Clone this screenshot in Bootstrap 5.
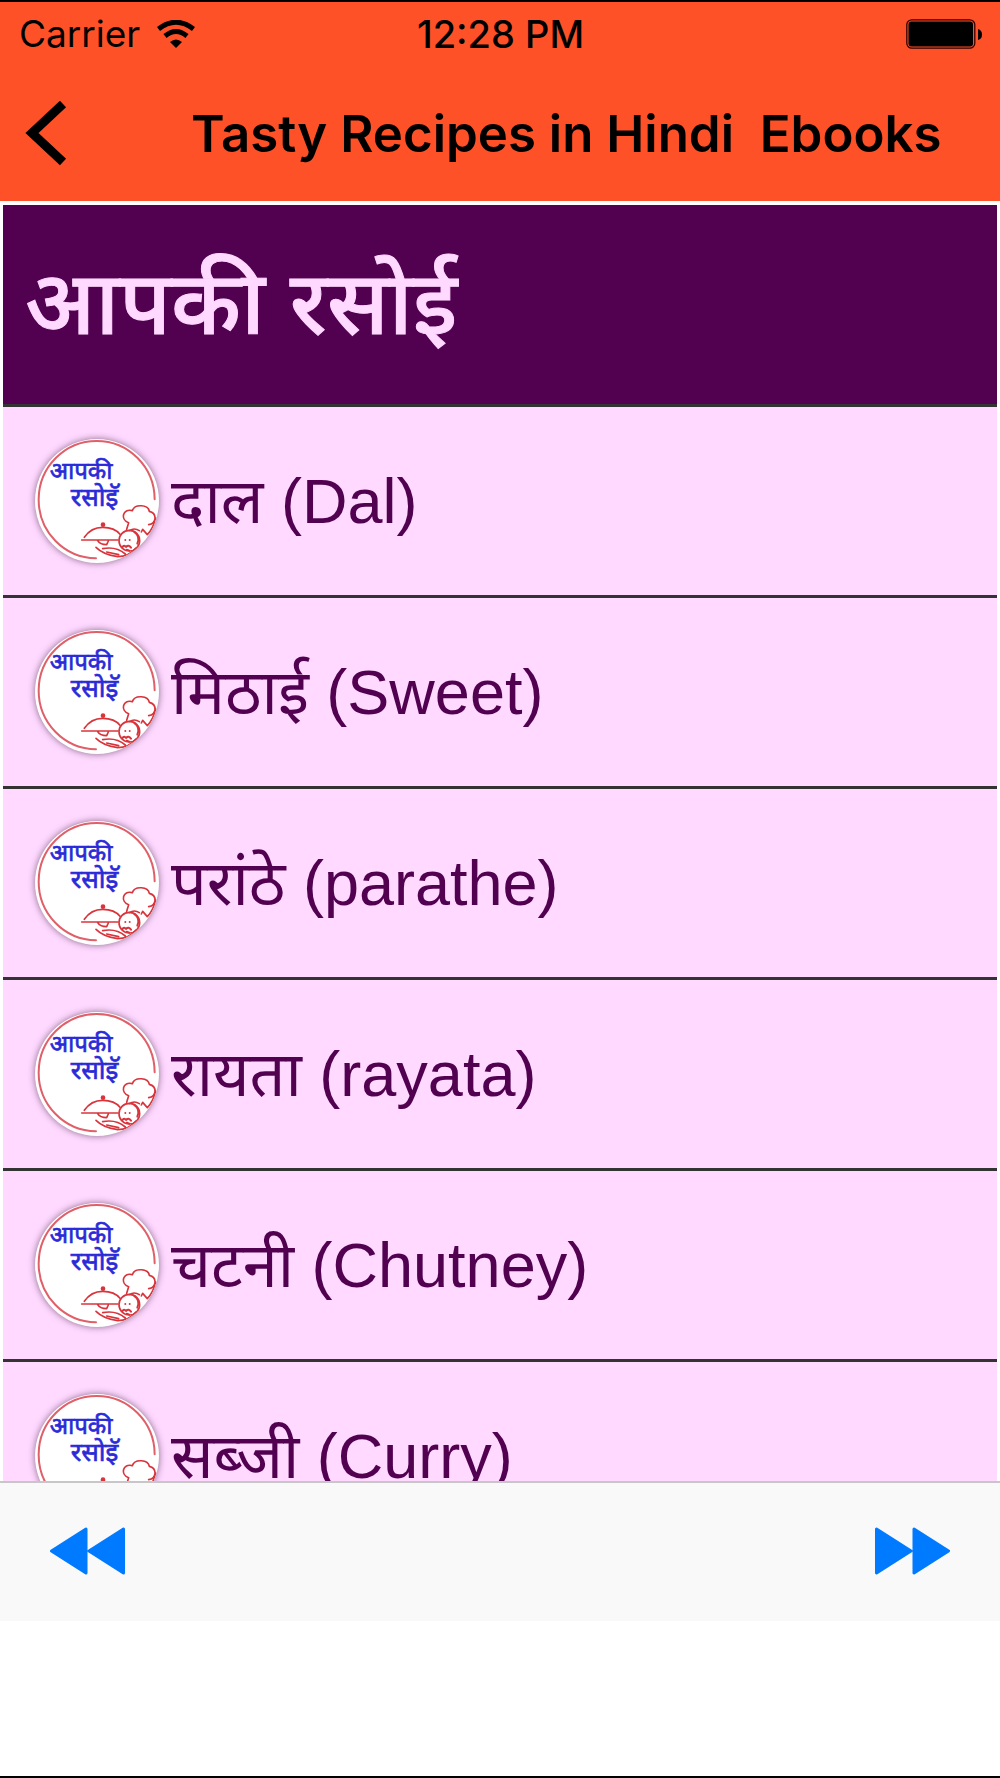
<!DOCTYPE html>
<html lang="hi">
<head>
<meta charset="utf-8">
<meta name="viewport" content="width=device-width, initial-scale=1">
<title>Tasty Recipes in Hindi Ebooks</title>
<link href="https://cdn.jsdelivr.net/npm/bootstrap@5.3.0/dist/css/bootstrap.min.css" rel="stylesheet">
<style>
body { font-family: Inter, "Liberation Sans", sans-serif; border-top: 2px solid #000; border-bottom: 2px solid #000; background: #fff; color: #000; }
.app-top { background: #ff5127; }
.status-row { height: 64px; font-size: 37px; line-height: 64px; padding: 0 18px 0 19px; }
.status-row .carrier { font-weight: 400; gap: 17px; }
.status-row .clock { font-size: 38px; font-weight: 500; }
.title-row { height: 135px; padding: 0 50px 0 24px; gap: 124px; }
.title-row h1 { font-size: 51px; line-height: 62px; font-weight: 600; }
.recipe-area { padding: 4px 3px 0; font-family: "Liberation Sans", "Noto Sans", sans-serif; }
.recipe-head { background: #520050; color: #ffd9ff; height: 202px; padding: 0 22px 4px; border-bottom: 3px solid #333; }
.recipe-head h2 { font-size: 89px; line-height: 120px; font-weight: 500; -webkit-text-stroke: 1px #ffd9ff; }
.recipe-link { height: 191px; padding: 0 32px; gap: 12px; background: #ffd9ff; color: #520050; border-bottom: 3px solid #333; font-size: 63px; line-height: 80px; text-decoration: none; }
.logo-disc { width: 124px; height: 124px; border-radius: 50%; background: #fff; box-shadow: 0 0 7px rgba(60, 30, 60, .6); }
.tool-row { height: 140px; padding: 0 50px 2px; background: #f9f9f9; border-top: 2px solid #c8c6c8; }
.home-gap { height: 155px; }
</style>
<script src="https://cdn.jsdelivr.net/npm/bootstrap@5.3.0/dist/js/bootstrap.bundle.min.js"></script>
</head>
<body class="d-flex flex-column vh-100 overflow-hidden">
<svg class="d-none" aria-hidden="true">
  <symbol id="logo" viewBox="47 47 372 372">
    <g fill="none" stroke="#d9343c" stroke-width="5" stroke-linecap="round" stroke-linejoin="round">
      <path d="M406 228A174 176 0 1 0 230 405" stroke="#e0606a" stroke-width="6"/>
      <path d="M187 350H296M195 342Q215 312 250 312Q286 312 302 333M235 352Q242 364 262 364L267 353M230 372Q252 394 295 400Q328 400 350 374M250 376Q290 368 318 392M262 386L298 394"/>
      <path d="M322 318L328 298C302 288 310 254 339 262C346 240 387 244 390 264C414 270 412 301 388 304M330 322Q345 312 360 322M366 326L370 318L384 334Q401 317 409 284"/>
      <circle cx="330" cy="352" r="31"/>
      <path d="M309 372Q314 363 320 371Q328 363 335 373M322 379L330 382M345 326Q364 340 354 361" stroke-width="6"/>
    </g>
    <g fill="#d9343c"><circle cx="251" cy="304" r="7"/><circle cx="318" cy="350" r="3"/><circle cx="331" cy="350" r="3"/></g>
    <g fill="#2a2ad8" stroke="#2a2ad8" stroke-width="2" font-family="Noto Sans, sans-serif" font-weight="400">
      <text x="91" y="167" font-size="72">आपकी</text>
      <text x="154" y="249" font-size="78">रसोइॅ</text>
    </g>
  </symbol>
</svg>
<header class="app-top flex-shrink-0">
  <div class="status-row row g-0 align-items-center">
    <div class="carrier col d-flex align-items-center">Carrier
      <svg width="38" height="28" viewBox="0 0 38 28" fill="none" stroke="#000" stroke-width="5" aria-label="Wi-Fi"><path d="M1.500 9Q19-4.500 36.500 9M8 16Q19 7 30 16"/><path d="M13 22Q19 17 25 22L19 28Z" fill="#000" stroke="none"/></svg>
    </div>
    <div class="clock col-auto">12:28 PM</div>
    <div class="col d-flex justify-content-end">
      <svg width="76" height="30" viewBox="0 0 76 30" aria-label="Battery"><rect x=".8" y=".8" width="68" height="28.400" rx="5" fill="none" stroke="#300" stroke-width="1.300"/><rect x="2.500" y="2.500" width="64.500" height="25" rx="3"/><path d="M72 10Q76 11 76 15.500Q76 20 72 21Z"/></svg>
    </div>
  </div>
  <div class="title-row d-flex align-items-center">
    <button class="btn p-0 border-0 d-flex" type="button" aria-label="Back"><svg width="43" height="66" viewBox="0 0 43 66" fill="none" stroke="#000" stroke-width="9"><path d="M39 3L8 32L39 61"/></svg></button>
    <h1 class="m-0 text-nowrap">Tasty Recipes in Hindi&nbsp; Ebooks</h1>
  </div>
</header>
<main class="recipe-area flex-grow-1 overflow-hidden">
  <div class="recipe-head d-flex align-items-center"><h2 class="m-0">आपकी रसोई</h2></div>
  <nav>
    <a href="#dal" class="recipe-link d-flex align-items-center"><svg class="logo-disc"><use href="#logo"/></svg><span>दाल (Dal)</span></a>
    <a href="#sweet" class="recipe-link d-flex align-items-center"><svg class="logo-disc"><use href="#logo"/></svg><span>मिठाई (Sweet)</span></a>
    <a href="#parathe" class="recipe-link d-flex align-items-center"><svg class="logo-disc"><use href="#logo"/></svg><span>परांठे (parathe)</span></a>
    <a href="#rayata" class="recipe-link d-flex align-items-center"><svg class="logo-disc"><use href="#logo"/></svg><span>रायता (rayata)</span></a>
    <a href="#chutney" class="recipe-link d-flex align-items-center"><svg class="logo-disc"><use href="#logo"/></svg><span>चटनी (Chutney)</span></a>
    <a href="#curry" class="recipe-link d-flex align-items-center"><svg class="logo-disc"><use href="#logo"/></svg><span>सब्जी (Curry)</span></a>
  </nav>
</main>
<footer class="flex-shrink-0">
  <div class="tool-row d-flex align-items-center justify-content-between">
    <button class="btn p-0 border-0 d-flex" type="button" aria-label="Previous"><svg width="75" height="48" viewBox="0 0 75 48" fill="#007aff" stroke="#007aff" stroke-width="3" stroke-linejoin="round"><path d="M1.500 24L36 2V46ZM39 24L73.500 2V46Z"/></svg></button>
    <button class="btn p-0 border-0 d-flex" type="button" aria-label="Next"><svg width="75" height="48" viewBox="0 0 75 48" fill="#007aff" stroke="#007aff" stroke-width="3" stroke-linejoin="round"><path d="M1.500 2L36 24L1.500 46ZM39 2L73.500 24L39 46Z"/></svg></button>
  </div>
  <div class="home-gap"></div>
</footer>
</body>
</html>
